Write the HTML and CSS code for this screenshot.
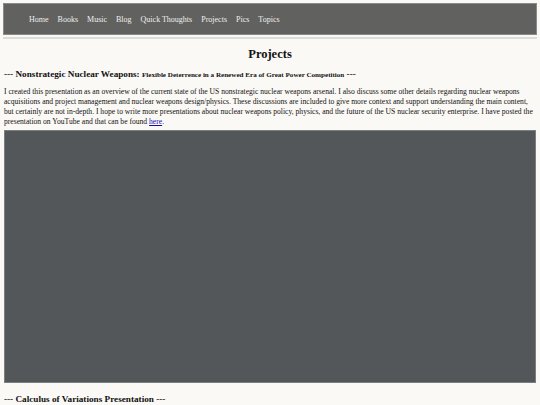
FILE: index.html
```html
<!DOCTYPE html>
<html>
<head>
<meta charset="utf-8">
<link rel="stylesheet" href="styles.css">
</head>
<body>
<nav class="topnav">
  <a href="#">Home</a>
  <a href="#">Books</a>
  <a href="#">Music</a>
  <a href="#">Blog</a>
  <a href="#">Quick Thoughts</a>
  <a href="#">Projects</a>
  <a href="#">Pics</a>
  <a href="#">Topics</a>
</nav>
<div class="rule"></div>
<main class="content">
  <h1 class="title">Projects</h1>
  <h2 class="sub">--- Nonstrategic Nuclear Weapons: <span class="small">Flexible Deterrence in a Renewed Era of Great Power Competition</span> ---</h2>
  <p class="para">I created this presentation as an overview of the current state of the US nonstrategic nuclear weapons arsenal. I also discuss some other details regarding nuclear weapons acquisitions and project management and nuclear weapons design/physics. These discussions are included to give more context and support understanding the main content, but certainly are not in-depth. I hope to write more presentations about nuclear weapons policy, physics, and the future of the US nuclear security enterprise. I have posted the presentation on YouTube and that can be found <a href="#" class="link">here</a>.</p>
  <div class="video"></div>
  <h2 class="sub last">--- Calculus of Variations Presentation ---</h2>
</main>
</body>
</html>
```
FILE: styles.css
```css
html, body {
  margin: 0;
  padding: 0;
  background: #fbf9f5;
}
body {
  font-family: "Liberation Serif", "Times New Roman", serif;
  color: #111;
  padding: 3px 3px 0 3px;
}
.topnav {
  box-sizing: border-box;
  height: 32px;
  background: #616160;
  border: 1px solid #8a8a88;
  display: flex;
  align-items: center;
  gap: 9px;
  padding-left: 25px;
}
.topnav a {
  color: #f0f0ee;
  text-decoration: none;
  font-size: 8px;
}
.rule {
  height: 2px;
  margin-top: 2px;
  background: #dcdcda;
}
.content {
  padding: 0 1px;
}
.title {
  text-align: center;
  font-size: 12.5px;
  margin: 7px 0 0 0;
  line-height: 16px;
}
.sub {
  font-size: 9.2px;
  margin: 6px 0 0 0;
  line-height: 12px;
}
.sub .small {
  font-size: 7.1px;
}
.para {
  font-size: 7.6px;
  line-height: 10px;
  margin: 6px 0 0 0;
}
.link {
  color: #1a0dab;
}
.video {
  box-sizing: border-box;
  margin-top: 3px;
  height: 253px;
  background: #54575a;
  border: 1px solid #7c7f82;
}
.sub.last {
  margin-top: 10px;
}
```
